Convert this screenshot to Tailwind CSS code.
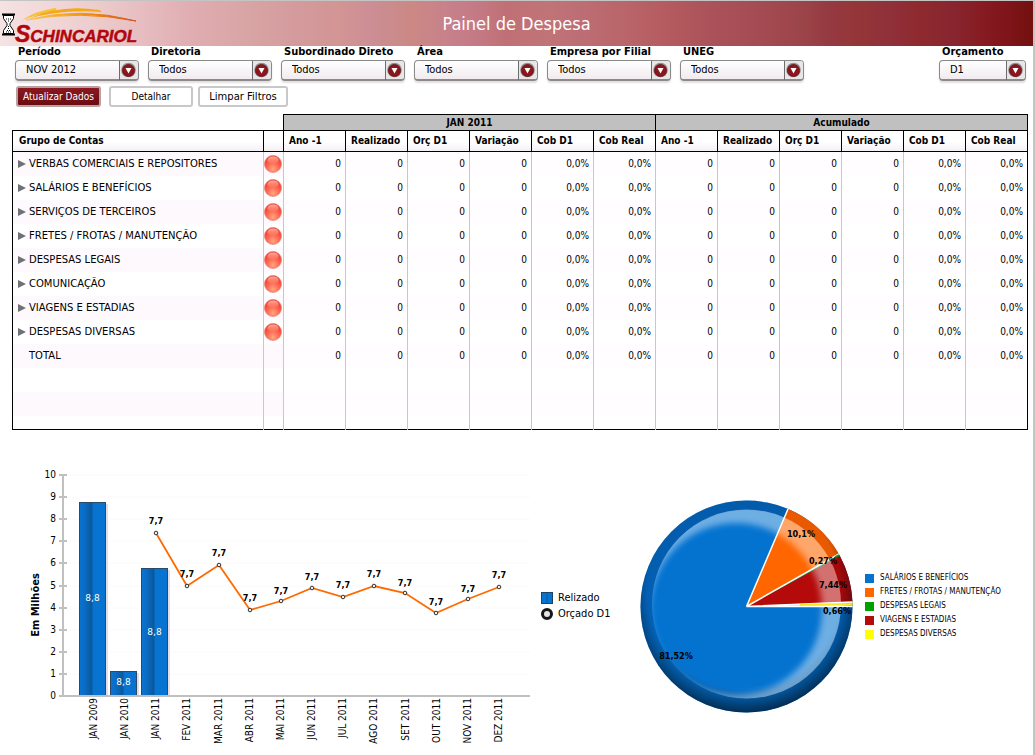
<!DOCTYPE html>
<html lang="pt-BR">
<head>
<meta charset="utf-8">
<title>Painel de Despesa</title>
<script src="https://cdn.jsdelivr.net/npm/@tailwindcss/browser@4"></script>
</head>
<body class="bg-white text-black font-['DejaVu_Sans_Condensed','DejaVu_Sans',sans-serif]">
<div class="min-h-screen border-t border-r-2 border-[#c4c4c4] overflow-hidden">

  <header class="relative flex h-[45px] items-center justify-center bg-[linear-gradient(90deg,#f5e2e2_0,#f0d4d6_6%,#eccaca_10%,#e6bcc0_14%,#dfacb0_19%,#d9a4a4_24%,#d49c9e_28%,#d39494_33%,#cc8e94_36%,#cb8884_40%,#c7828a_43%,#c47a86_46%,#c07074_49%,#c07478_53%,#bc6c72_57%,#b96468_61%,#b45a5e_65%,#aa525a_69%,#a44a52_74%,#9a4448_78%,#963a42_80%,#943638_83%,#90303a_86%,#8e2a2e_89%,#882630_92%,#861c22_95%,#80161c_97%,#74100e_100%)]">
    <h1 class="text-[18px] leading-6 text-white">Painel de Despesa</h1>
    <div class="absolute left-0 top-0 flex">
      <svg width="145" height="45" viewBox="0 0 145 45" class="overflow-visible" role="img" aria-label="Schincariol">
        <defs><linearGradient id="sun" x1="0" x2="1"><stop offset="0" stop-color="#f8c860"/><stop offset=".5" stop-color="#f0980c"/><stop offset="1" stop-color="#d8501c"/></linearGradient></defs>
        <path d="M22 19Q36 10 55 7Q58 8 55 10Q38 13 22 19Z" fill="#f8c030"/>
        <path d="M28 18Q60 3 99 9Q102 10 101 11Q60 8 28 18Z" fill="#f4a818"/>
        <path d="M26 19Q80 5 136 20Q80 9 26 19Z" fill="url(#sun)" stroke="url(#sun)"/>
        <text x="15" y="41" fill="#b2070f" stroke="#b2070f" stroke-width=".5" font-family="'Liberation Sans',sans-serif" font-weight="bold" font-style="italic" font-size="17"><tspan font-size="23">S</tspan>CHINCARIOL</text>
        <g stroke="#000" fill="#fff">
          <path d="M3.500 14.500V17.500L7 22.500V24.500L3.500 29.500V32.500H13.500V29.500L10 24.500V22.500L13.500 17.500V14.500Z"/>
          <path d="M2 13.500H15M2 33.500H15" stroke-width="2"/>
          <path d="M6 18H11M8 20H9M8.500 25V28M6 31H11M7 29.500H10" stroke-dasharray="1 1"/>
        </g>
      </svg>
    </div>
  </header>

  <form class="relative" onsubmit="return false">
    <div id="filters" class="flex gap-[9px] pl-[15px] pr-[7px]"></div>
    <div class="mt-[5px] flex gap-[5px] pl-4">
      <button class="h-[21px] w-[85px] rounded-[3px] border-2 border-[#b9a0a2] bg-linear-to-b from-[#8c1820] to-[#6a0c12] text-[10px] leading-4 text-white whitespace-nowrap">Atualizar Dados</button>
      <button class="ml-[3px] h-[21px] w-[84px] rounded-[3px] border-2 border-[#c8c8c8] bg-white text-[10px] leading-4 whitespace-nowrap">Detalhar</button>
      <button class="h-[21px] w-[90px] rounded-[3px] border-2 border-[#c8c8c8] bg-white font-['DejaVu_Sans'] text-[10px] leading-4 whitespace-nowrap">Limpar Filtros</button>
    </div>
  </form>

  <div class="mt-[7px] ml-3 mr-[5px]">
    <table class="w-full table-fixed border-collapse font-['DejaVu_Sans',sans-serif] text-[10px] leading-4">
      <colgroup><col class="w-[251px]"><col class="w-[20px]"><col span="12"></colgroup>
      <thead id="head" class="font-['DejaVu_Sans_Condensed']"></thead>
      <tbody id="rows"></tbody>
    </table>
  </div>

  <section class="mt-[11px] flex pl-3">
    <svg id="chart" class="h-[312px] w-[523px] shrink-0" viewBox="12 441 523 312" role="img" aria-label="Relizado e Orçado D1, em milhões"></svg>
    <ul class="mt-[149px] ml-[6px] w-[79px] shrink-0 text-[11px] leading-4">
      <li class="flex items-center gap-[5px]"><span class="h-[12px] w-[12px] border border-[#1c4468] bg-linear-to-r from-[#0874d2] from-40% via-[#0b5a9e] via-50% to-[#0874d2] to-60%"></span>Relizado</li>
      <li class="flex items-center gap-[5px]"><span class="h-[12px] w-[12px] rounded-full border-[3px] border-[#161616] bg-[#e4e4e4]"></span>Orçado D1</li>
    </ul>
    <svg id="pie" class="mt-[49px] ml-[10px] h-[240px] w-[225px] shrink-0" viewBox="630 490 225 240" role="img" aria-label="Distribuição das despesas"></svg>
    <ul id="pielegend" class="mt-[130px] ml-[10px] font-['DejaVu_Sans_Condensed'] text-[8px] leading-[14px] whitespace-nowrap"></ul>
  </section>
</div>

<script>
const byId = id => document.getElementById(id);

byId('filters').innerHTML = [
  ['Período','NOV 2012'],['Diretoria','Todos'],['Subordinado Direto','Todos'],['Área','Todos'],
  ['Empresa por Filial','Todos'],['UNEG','Todos'],['Orçamento','D1']
].map(([label, value], i) => `
  <div class="${i === 6 ? 'ml-auto w-[87px]' : 'w-[124px]'}">
    <label for="f${i}" class="block pl-[3px] text-[11px] leading-[12px] font-bold whitespace-nowrap">${label}</label>
    <div class="relative mt-[2px]">
      <select id="f${i}" class="block h-[21px] w-full appearance-none rounded-[4px] border border-[#8a8a8a] border-b-2 bg-linear-to-b from-white to-[#f1ebef] pl-[10px] text-[11px] leading-4 shadow-[0_2px_2px_#e4dce0]"><option>${value}</option></select>
      <svg class="pointer-events-none absolute right-0 top-0" width="21" height="21" viewBox="0 0 21 21">
        <path d="M1.500 1H17Q20 1 20 4V16Q20 19 17 19H1.500Z" fill="#e9e6e8"/>
        <path d="M1.500 1V20" stroke="#6c6c6c"/>
        <circle cx="10.500" cy="10" r="7.300" fill="#8f8f8f"/><circle cx="10.500" cy="10.500" r="6" fill="#8c161e" stroke="#6c0e14" stroke-width=".8"/>
        <path d="M7.500 8H13.500L10.500 13.500Z" fill="#fff"/>
      </svg>
    </div>
  </div>`).join('');

const cols = ['Ano -1','Realizado','Orç D1','Variação','Cob D1','Cob Real'];
byId('head').innerHTML = `
  <tr class="h-[16px]"><td colspan="2" class="p-0"></td>
    <th colspan="6" scope="colgroup" class="border border-black bg-[#c0c0c0] p-0 pt-px leading-[14px]">JAN 2011</th>
    <th colspan="6" scope="colgroup" class="border border-black bg-[#c0c0c0] p-0 pt-px leading-[14px]">Acumulado</th></tr>
  <tr class="h-[21px] bg-linear-to-b from-white from-50% to-[#f4f0f4]">
    <th scope="col" class="border border-black p-0 pl-[6px] text-left">Grupo de Contas</th><th class="border border-black p-0"></th>
    ${[...cols, ...cols].map(c => `<th scope="col" class="border border-black p-0 pl-[5px] text-left whitespace-nowrap">${c}</th>`).join('')}</tr>`;

const names = ['VERBAS COMERCIAIS E REPOSITORES','SALÁRIOS E BENEFÍCIOS','SERVIÇOS DE TERCEIROS','FRETES / FROTAS / MANUTENÇÃO','DESPESAS LEGAIS','COMUNICAÇÃO','VIAGENS E ESTADIAS','DESPESAS DIVERSAS','TOTAL','','',''];
const ball = `<svg class="block" width="18" height="18" viewBox="0 0 19 19"><defs><radialGradient id="ball" cx=".5" cy=".8" r=".75"><stop offset="0" stop-color="#ffa880"/><stop offset=".5" stop-color="#ff6450"/><stop offset="1" stop-color="#f03428"/></radialGradient><linearGradient id="gloss" x1="0" y1="0" x2="0" y2="1"><stop offset="0" stop-color="#ffd0b8" stop-opacity=".8"/><stop offset="1" stop-color="#ff9880" stop-opacity=".2"/></linearGradient></defs><circle cx="9.500" cy="9.500" r="9" fill="url(#ball)" stroke="#e08a80" stroke-width=".8"/><ellipse cx="9.500" cy="5.500" rx="6" ry="4" fill="url(#gloss)"/></svg>`;
byId('rows').innerHTML = names.map((n, i) => {
  const real = i < 8;
  return `<tr class="${i === 11 ? 'h-[14px] border-b border-black' : 'h-[24px]'} ${i % 2 ? 'bg-white' : 'bg-[#fdf9fd]'}">
    <th scope="row" class="border-l border-l-black border-r border-r-[#c8c8c8] p-0 pl-[5px] text-left font-normal whitespace-nowrap"><span class="flex items-center gap-[2px]">${real ? '<svg width="9" height="8" viewBox="0 0 9 8"><path d="M0 0L8 4L0 8Z" fill="#6e7274"/></svg>' : '<span class="w-[9px]"></span>'}${n}</span></th>
    <td class="border-r border-[#c8c8c8] p-0">${real ? ball : ''}</td>
    ${[...Array(12)].map((_, c) => `<td class="border-r ${c === 11 ? 'border-r-black' : 'border-r-[#c8c8c8]'} bg-white/70 p-0 pr-1 pt-px text-right font-['DejaVu_Sans_Condensed']">${n ? (c % 6 > 3 ? '0,0%' : '0') : ''}</td>`).join('')}
  </tr>`;
}).join('');

const FONT = 'font-family="DejaVu Sans Condensed, DejaVu Sans, sans-serif"';
const WIDE = 'font-family="DejaVu Sans, sans-serif"';
const months = ['JAN 2009','JAN 2010','JAN 2011','FEV 2011','MAR 2011','ABR 2011','MAI 2011','JUN 2011','JUL 2011','AGO 2011','SET 2011','OUT 2011','NOV 2011','DEZ 2011'];
const pts = [[156,533,521],[187,586,574],[219,565,553],[250,610,598],[281,601,591],[312,588,577],[343,597,585],[374,586,574],[405,593,583],[436,613,602],[468,599,589],[499,587,575]];
let s = '<defs><linearGradient id="bar"><stop offset="0" stop-color="#0b74d0"/><stop offset=".2" stop-color="#0a6cc4"/><stop offset=".48" stop-color="#0b5798"/><stop offset=".52" stop-color="#0874d2"/><stop offset="1" stop-color="#0874d2"/></linearGradient></defs>';
for (let v = 0; v <= 10; v++) {
  const y = Math.round(696 - v * 22.1);
  if (v) s += `<path d="M68 ${y}H530" stroke="#fafafa"/>`;
  s += `<path d="M59 ${y}H67" stroke="#c0c0c0" stroke-width="2"/><text x="56" y="${y + 3}" text-anchor="end" font-size="10" ${FONT}>${v}</text>`;
}
s += '<path d="M63 474V697" stroke="#c0c0c0" stroke-width="2"/>';
[[79,502,598],[110,671,682],[141,568,632]].forEach(([x, y, t]) => {
  s += `<rect x="${x + 2}" y="${y + 2}" width="27" height="${694 - y}" fill="#e6dce4"/><rect x="${x + .5}" y="${y + .5}" width="26" height="${695 - y}" fill="url(#bar)" stroke="#2b4a68"/><text x="${x + 13.5}" y="${t + 3}" text-anchor="middle" fill="#fff" font-size="9" ${WIDE}>8,8</text>`;
});
s += '<path d="M62 696H530" stroke="#c0c0c0" stroke-width="2"/>';
s += `<polyline points="${pts.map(p => p[0] + ',' + p[1]).join(' ')}" fill="none" stroke="#ff6a00" stroke-width="1.800"/>`;
pts.forEach(([x, y, t]) => { s += `<circle cx="${x}" cy="${y}" r="1.800" fill="#eee" stroke="#333"/><text x="${x}" y="${t + 3}" text-anchor="middle" font-weight="bold" font-size="9" ${FONT}>7,7</text>`; });
months.forEach((m, i) => { const x = Math.round(97 + i * 31.15); s += `<text transform="translate(${x} 698) rotate(-90)" text-anchor="end" font-size="10" ${FONT}>${m}</text>`; });
s += `<text transform="translate(39 605) rotate(-90)" text-anchor="middle" font-weight="bold" font-size="11" ${FONT}>Em Milhões</text>`;
byId('chart').innerHTML = s;

const C = 'M746.5 606.5L';
byId('pie').innerHTML = `
<defs>
  <radialGradient id="rim" gradientUnits="userSpaceOnUse" cx="744" cy="592" r="121"><stop offset=".8" stop-color="#001020" stop-opacity="0"/><stop offset="1" stop-color="#001020" stop-opacity=".72"/></radialGradient>
  <linearGradient id="ring" x1="0" y1="0" x2="0" y2="1"><stop offset="0" stop-color="#002860" stop-opacity=".32"/><stop offset=".55" stop-color="#002860" stop-opacity=".25"/><stop offset="1" stop-color="#002860" stop-opacity="0"/></linearGradient>
  <filter id="soft" x="-20%" y="-20%" width="140%" height="140%"><feGaussianBlur stdDeviation="3"/></filter>
  <mask id="crescent" maskUnits="userSpaceOnUse" x="630" y="490" width="240" height="240"><rect x="630" y="490" width="240" height="240" fill="#fff"/><circle cx="736" cy="609" r="86" fill="#000" filter="url(#soft)"/></mask>
</defs>
<circle cx="746.5" cy="606.5" r="106" fill="#0473d0"/>
<path fill-rule="evenodd" fill="url(#ring)" d="M640.500 606.500a106 106 0 1 0 212 0a106 106 0 1 0 -212 0ZM652 604.500a94.500 94.500 0 1 1 189 0a94.500 94.500 0 1 1 -189 0Z"/>
<path d="${C}788 509A106 106 0 0 1 839 554Z" fill="#ff6600"/>
<path d="${C}839 554L840 556Z" fill="#00a000"/>
<path d="${C}840 556A106 106 0 0 1 852.500 602Z" fill="#b40a0a"/>
<path d="${C}852.500 602V606.500Z" fill="#ffff00"/>
<path d="M788 509A106 106 0 0 1 852.500 602H841A94.500 94.500 0 0 0 784 518Z" fill="#400" opacity=".12"/>
<circle cx="746.5" cy="606.5" r="106" fill="url(#rim)"/>
<circle cx="746.5" cy="604" r="94.500" fill="#fff" opacity=".42" mask="url(#crescent)"/>
<path d="${C}788 509M746.5 606.5L839 554M746.5 606.5L852.500 602M746.5 606.5H852.500" stroke="#fff" stroke-width="1.500" fill="none"/>
<path d="M800 604.800L852 604.300" stroke="#f4ec20" stroke-width="2"/>
<path d="M835 557L839 555" stroke="#2c8a2c" stroke-width="1.500"/>
<g font-weight="bold" font-size="9" text-anchor="middle" ${FONT}><text x="801" y="537">10,1%</text><text x="823" y="564">0,27%</text><text x="833" y="588">7,44%</text><text x="837" y="614">0,66%</text><text x="676" y="659">81,52%</text></g>`;

byId('pielegend').innerHTML = [['#0473d0','SALÁRIOS E BENEFÍCIOS'],['#ff6600','FRETES / FROTAS / MANUTENÇÃO'],['#00a000','DESPESAS LEGAIS'],['#b40a0a','VIAGENS E ESTADIAS'],['#ffff00','DESPESAS DIVERSAS']]
  .map(([c, n]) => `<li class="flex items-center gap-[6px]"><span class="h-[9px] w-[9px]" style="background:${c}"></span>${n}</li>`).join('');
</script>
</body>
</html>
